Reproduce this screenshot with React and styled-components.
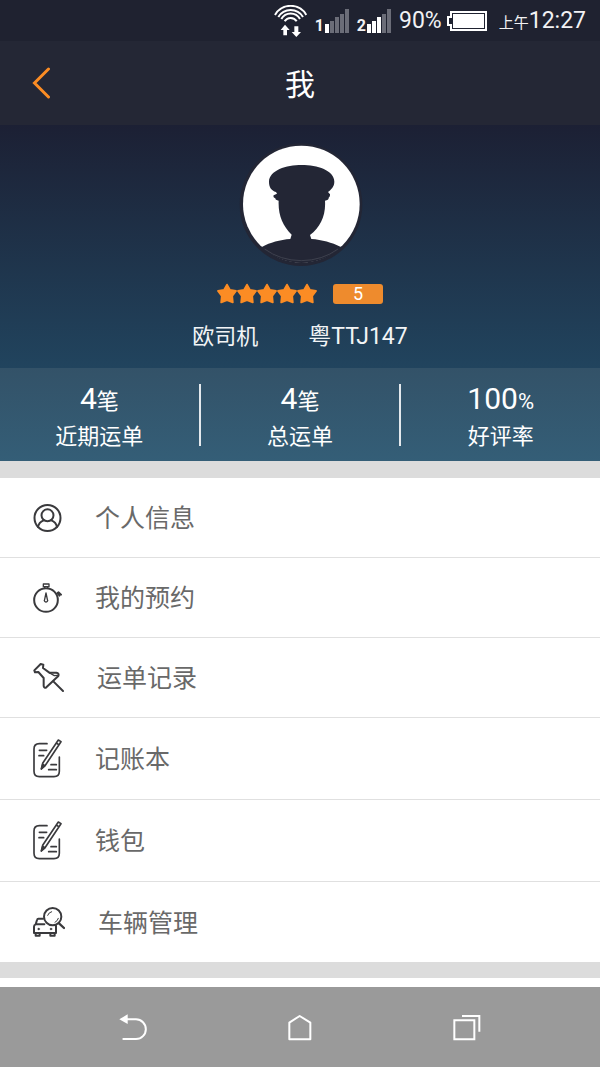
import React from 'react';
import styled, { createGlobalStyle } from 'styled-components';

const GlobalStyle = createGlobalStyle`
  * {
    box-sizing: border-box;
  }
  body {
    margin: 0;
    background-color: #fff;
    font-family: Roboto, "Noto Sans CJK SC", sans-serif;
  }
  svg {
    display: block;
    flex-shrink: 0;
  }
`;

const Screen = styled.div`
  display: flex;
  flex-direction: column;
  min-height: 100vh;
`;

const StatusBar = styled.div`
  display: flex;
  align-items: center;
  justify-content: flex-end;
  height: 41px;
  padding-right: 14px;
  background-color: #1f2230;
  color: #f2f2f4;
`;

const Signal = styled.div`
  display: flex;
  align-items: flex-end;
  gap: 1px;
  margin-left: 8px;
`;

const SimNumber = styled.span`
  font-size: 16px;
  font-weight: 700;
  line-height: 14px;
`;

const StatusText = styled.span`
  margin-left: ${props => props.$gap}px;
  font-size: 23px;
  line-height: 28px;
`;

const Meridiem = styled.small`
  font-size: 15px;
  line-height: 15px;
`;

const Battery = styled.svg`
  margin-left: 5px;
`;

const Header = styled.header`
  display: grid;
  grid-template-columns: 1fr auto 1fr;
  align-items: center;
  height: 84px;
  padding: 0 32px;
  background-color: #242735;
`;

const BackButton = styled.button`
  justify-self: start;
  padding: 0;
  border: none;
  background: none;
  cursor: pointer;
`;

const Title = styled.h1`
  margin: 0;
  padding-top: 4px;
  color: #fff;
  font-size: 30px;
  font-weight: 400;
  line-height: 40px;
`;

const Profile = styled.section`
  display: flex;
  flex-direction: column;
  align-items: center;
  padding: 18px 0 16px;
  background-image: linear-gradient(180deg, #1c2034, #21445e);
`;

const Rating = styled.div`
  display: flex;
  align-items: center;
  gap: 16px;
  margin-top: 14px;
`;

const Stars = styled.div`
  display: flex;
`;

const Score = styled.span`
  width: 50px;
  border-radius: 3px;
  background-color: #ee8b2d;
  color: #fff;
  font-size: 18px;
  line-height: 20px;
  text-align: center;
`;

const Driver = styled.div`
  display: flex;
  gap: 50px;
  margin-top: 18px;
  color: #f2f4f6;
  font-size: 22px;
  line-height: 30px;
`;

const Plate = styled.span`
  font-size: 23px;
`;

const Stats = styled.section`
  display: grid;
  grid-template-columns: 1fr 2px 1fr 2px 1fr;
  align-items: center;
  height: 93px;
  background-image: linear-gradient(180deg, #335268, #345e77);
  color: #fff;
`;

const Divider = styled.span`
  height: 62px;
  background-color: #e4e9ed;
`;

const Stat = styled.div`
  padding-top: 5px;
  text-align: center;
`;

const StatValue = styled.div`
  font-size: 30px;
  line-height: 40px;
`;

const Unit = styled.small`
  font-size: 22px;
  line-height: 22px;
`;

const StatLabel = styled.div`
  font-size: 22px;
  line-height: 36px;
`;

const Band = styled.div`
  height: ${props => props.$height}px;
  background-color: #dcdcdc;
`;

const Menu = styled.nav`
  display: flex;
  flex-direction: column;
`;

const MenuItem = styled.a`
  display: flex;
  align-items: center;
  gap: 33px;
  height: ${props => (props.$tall ? 82 : 80)}px;
  padding: 0 33px;
  border-bottom: 1px solid #e0e0e0;
  color: #696969;
  text-decoration: none;

  &:last-child {
    border-bottom: none;
  }
`;

const MenuLabel = styled.span`
  padding-top: 3px;
  font-size: 25px;
  line-height: 36px;
`;

const NavBar = styled.footer`
  display: grid;
  grid-template-columns: repeat(3, 1fr);
  height: 80px;
  margin-top: auto;
  padding: 0 50px;
  background-color: #9a9a9a;
`;

const NavButton = styled.button`
  display: flex;
  align-items: center;
  justify-content: center;
  padding: 0;
  border: none;
  background: none;
  cursor: pointer;
`;

const dark = {
  fill: 'none',
  stroke: '#3a3a3d',
  strokeWidth: 6,
  strokeLinecap: 'round',
  strokeLinejoin: 'round'
};

function WifiIcon() {
  return (
    <svg width="33" height="32" viewBox="37 14 99 96" fill="none" stroke="#fff" strokeWidth="6">
      <path d="M40 44 A54 54 0 0 1 134 44" />
      <path d="M50 50 A43 43 0 0 1 124 50" />
      <path d="M59 56 A32 32 0 0 1 115 56" />
      <path d="M69 63 A21 21 0 0 1 105 63" />
      <path d="M70 73 L84 89 H76 V105 H65 V89 H57 Z" fill="#fff" stroke="none" />
      <path d="M104 110 L90 95 H98 V78 H110 V95 H118 Z" fill="#fff" stroke="none" />
    </svg>
  );
}

function SignalBars({ level }) {
  const heights = [9, 12, 16, 19, 24];
  return (
    <svg width="24" height="24" viewBox="0 0 24 24">
      {heights.map((h, i) => (
        <rect key={h} x={i * 5} y={24 - h} width="4" height={h} fill={i < level ? '#fff' : '#6b6d78'} />
      ))}
    </svg>
  );
}

function BatteryIcon() {
  return (
    <Battery width="40" height="20" viewBox="0 0 40 20">
      <path d="M4 1 H39 V19 H4 V14 H1 V6 H4 Z" fill="none" stroke="#fff" strokeWidth="2" />
      <rect x="6" y="3" width="31" height="14" fill="#fff" />
    </Battery>
  );
}

function Avatar() {
  return (
    <svg width="126" height="126" viewBox="111 39 378 378" role="img" aria-label="头像">
      <circle cx="303" cy="224" r="184" fill="#232635" />
      <circle cx="304" cy="222" r="175" fill="#fff" />
      <path
        d="M207 155 C208 121 258 105 305 105 C352 105 403 121 403 155 C403 170 393 179 384 186 L390 193 Q391 200 386 203 Q387 211 375 212 C378 256 361 292 330 315 L334 327 C366 329 396 338 421 350 L425 351 A177 177 0 0 1 183 351 L187 350 C210 338 240 329 271 327 L275 314 C248 288 234 255 236 212 Q226 211 226 205 Q218 202 221 196 L231 191 L228 186 C214 181 207 172 207 155 Z"
        fill="#232635"
      />
      <path d="M194 357 Q240 391 304 392 Q368 391 414 357" fill="none" stroke="#4b4e5b" strokeWidth="2" />
    </svg>
  );
}

function Star() {
  return (
    <svg width="20" height="21" viewBox="0 0 20 21">
      <path
        d="M10 1.6 L13 7 L19 8 L15.2 13 L15.8 19.4 L10 17.2 L4.2 19.4 L4.8 13 L1 8 L7 7 Z"
        fill="#fb8c24"
        stroke="#fb8c24"
        strokeWidth="1.8"
        strokeLinejoin="round"
      />
    </svg>
  );
}

function PersonIcon() {
  return (
    <svg width="29" height="28" viewBox="54 39 87 84" {...dark}>
      <circle cx="97.5" cy="81" r="39" />
      <circle cx="97.5" cy="73" r="18" />
      <path d="M69 108 C71 97 78 91 86 88 M126 108 C124 97 117 91 109 88" />
    </svg>
  );
}

function StopwatchIcon() {
  return (
    <svg width="29" height="30" viewBox="54 275 87 90" {...dark}>
      <circle cx="93" cy="326" r="35.5" />
      <path d="M85 278 H102 V286 H85 Z M89 287 V291 M98 287 V291" strokeWidth="4" />
      <path d="M126 307 L131 303 L138 310 M129 304 L133 313" />
      <path d="M93 305 L97 324 A5 5 0 1 1 89 324 Z" strokeWidth="4" />
    </svg>
  );
}

function PinIcon() {
  return (
    <svg width="31" height="29" viewBox="54 68 93 87" {...dark}>
      <path d="M58 90 L77 71 L85 73 L84 83 L103 97 L124 97 Q133 99 130 107 L94 141 Q88 145 86 137 L86 113 L70 95 L60 96 Z" />
      <path d="M104 98 L118 106 L128 105" strokeWidth="4" />
      <path d="M115 123 L144 152" />
    </svg>
  );
}

function NoteIcon() {
  return (
    <svg width="29" height="39" viewBox="54 297 87 117" {...dark}>
      <path d="M96 311 H73 Q57 311 57 327 V394 Q57 410 73 410 H117 Q133 410 133 394 V351" strokeWidth="5" />
      <path d="M73 331 H95 M72 347 H86 M108 374 H124 M101 389 H124" strokeWidth="5" />
      <path d="M130 300 L138 305 L91 376 L79 387 L83 370 Z M124 309 L131 314" strokeWidth="5" />
      <path d="M83 372 L90 377 L79 387 Z" fill="#3a3a3d" strokeWidth="4" />
    </svg>
  );
}

function CarIcon() {
  return (
    <svg width="32" height="30" viewBox="54 322 96 90" {...dark}>
      <path d="M84 357 H70 Q67 357 66 361 L62 374 Q57 376 57 381 V400 H123 V378 M62 374 H88" />
      <path d="M62 401 V408 H74 V401 M106 401 V408 H119 V401" />
      <circle cx="71" cy="388" r="3" fill="#3a3a3d" strokeWidth="1" />
      <circle cx="108" cy="388" r="3" fill="#3a3a3d" strokeWidth="1" />
      <circle cx="113" cy="351" r="26" />
      <path d="M132 371 L147 385" strokeWidth="7" />
      <path d="M98 347 Q101 338 110 336 M120 368 Q128 364 130 356" strokeWidth="3" />
    </svg>
  );
}

const stats = [
  { value: '4', unit: '笔', label: '近期运单' },
  { value: '4', unit: '笔', label: '总运单' },
  { value: '100', unit: '%', label: '好评率' }
];

const menu = [
  { label: '个人信息', icon: <PersonIcon /> },
  { label: '我的预约', icon: <StopwatchIcon /> },
  { label: '运单记录', icon: <PinIcon /> },
  { label: '记账本', icon: <NoteIcon />, tall: true },
  { label: '钱包', icon: <NoteIcon />, tall: true },
  { label: '车辆管理', icon: <CarIcon /> }
];

function App() {
  return (
    <Screen>
      <GlobalStyle />
      <StatusBar>
        <WifiIcon />
        <Signal>
          <SimNumber>1</SimNumber>
          <SignalBars level={1} />
        </Signal>
        <Signal>
          <SimNumber>2</SimNumber>
          <SignalBars level={3} />
        </Signal>
        <StatusText $gap={8}>90%</StatusText>
        <BatteryIcon />
        <StatusText $gap={12}><Meridiem>上午</Meridiem>12:27</StatusText>
      </StatusBar>

      <Header>
        <BackButton aria-label="返回">
          <svg width="20" height="32" viewBox="0 0 20 32" fill="none" stroke="#fb8c24" strokeWidth="3" strokeLinecap="round">
            <path d="M16.5 2 L2.5 16 L16.5 30" />
          </svg>
        </BackButton>
        <Title>我</Title>
      </Header>

      <Profile>
        <Avatar />
        <Rating>
          <Stars>
            {[1, 2, 3, 4, 5].map(n => <Star key={n} />)}
          </Stars>
          <Score>5</Score>
        </Rating>
        <Driver>
          <span>欧司机</span>
          <Plate>粤TTJ147</Plate>
        </Driver>
      </Profile>

      <Stats>
        {stats.map((stat, i) => (
          <React.Fragment key={stat.label}>
            {i > 0 && <Divider />}
            <Stat>
              <StatValue>{stat.value}<Unit>{stat.unit}</Unit></StatValue>
              <StatLabel>{stat.label}</StatLabel>
            </Stat>
          </React.Fragment>
        ))}
      </Stats>

      <Band $height={17} />
      <Menu>
        {menu.map(item => (
          <MenuItem key={item.label} href="#" $tall={item.tall}>
            {item.icon}
            <MenuLabel>{item.label}</MenuLabel>
          </MenuItem>
        ))}
      </Menu>
      <Band $height={16} />

      <NavBar>
        <NavButton aria-label="后退">
          <svg width="28" height="27" viewBox="87 130 84 81" fill="none" stroke="#fff" strokeWidth="6" strokeLinecap="round">
            <path d="M110 146 H138 A29 29 0 0 1 138 205 H100" />
            <path d="M88 146 L113 131 V160 Z" fill="#fff" stroke="none" />
          </svg>
        </NavButton>
        <NavButton aria-label="主页">
          <svg width="24" height="27" viewBox="594 130 72 81" fill="none" stroke="#fff" strokeWidth="6" strokeLinejoin="round">
            <path d="M598 206 V156 L629 136 L661 156 V206 Z" />
          </svg>
        </NavButton>
        <NavButton aria-label="最近任务">
          <svg width="28" height="27" viewBox="1088 130 84 81" fill="none" stroke="#fff" strokeWidth="6">
            <path d="M1092 149 H1152 V206 H1092 Z M1115 136 H1167 V183" />
          </svg>
        </NavButton>
      </NavBar>
    </Screen>
  );
}

export default App;
